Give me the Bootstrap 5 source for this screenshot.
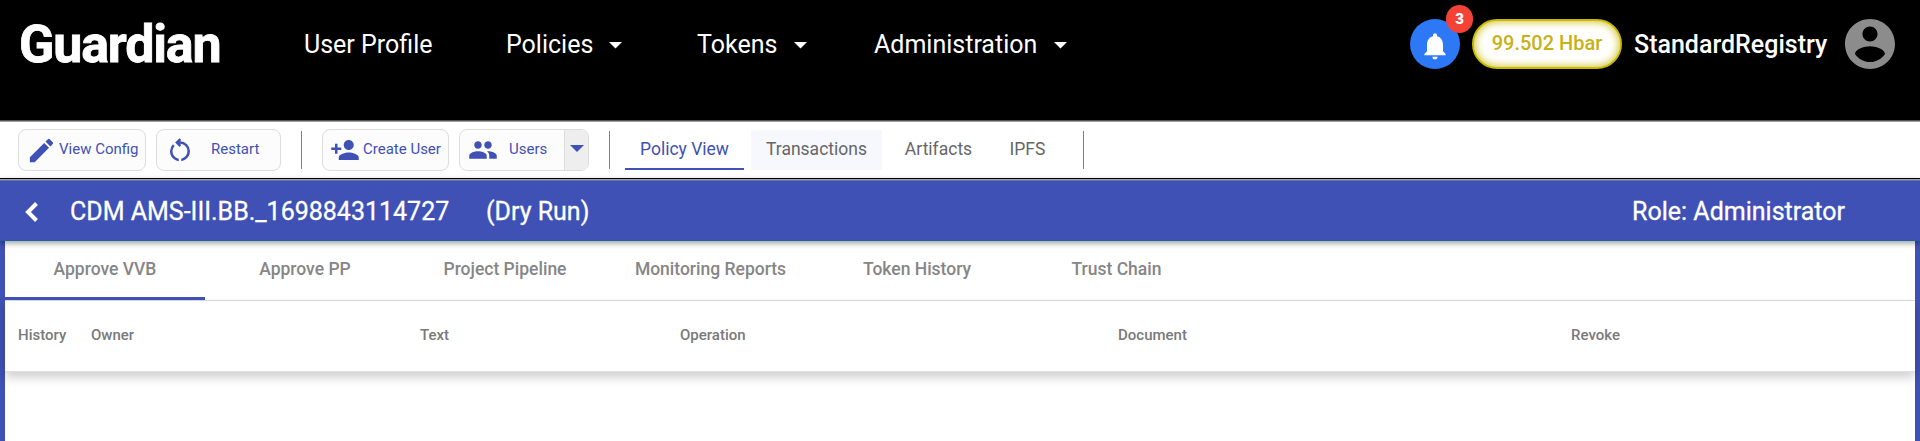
<!DOCTYPE html>
<html lang="en">
<head>
<meta charset="utf-8">
<title>Guardian</title>
<meta name="viewport" content="width=device-width, initial-scale=1">
<link rel="stylesheet" href="https://cdn.jsdelivr.net/npm/bootstrap@5.3.0/dist/css/bootstrap.min.css">
<style>
:root{--indigo:#3f51b5}
body{font-family:Roboto,"Liberation Sans",sans-serif;height:441px;overflow:hidden;background:#fff;line-height:1.2}
svg{display:block;flex:none}
.track{display:grid;justify-content:start;align-items:center;white-space:nowrap}
.topbar{height:120px;background:#000;color:#fff}
.topbar-in{height:88px}
.main-menu{grid-template-columns:304px 202px 191px 177px 300px;font-size:25px}
.wordmark{font-weight:700;font-size:52px;letter-spacing:-1.2px;padding:2px 0 0 19px;line-height:1;-webkit-text-stroke:.8px #fff}
.main-menu .nav-link{color:#fff;padding:2px 0 0}
.bell{width:50px;height:50px;border-radius:50%;background:#2c78f6}
.count{position:absolute;left:36px;top:-14px;width:27px;height:28px;border-radius:14px;background:#f44336;font-size:15px;font-weight:900;padding-bottom:1px}
.hbar{width:150px;height:50px;border:2px solid #c8b900;border-radius:25px;background:#fff;color:#c8b116;font-size:20px;font-weight:500;box-shadow:inset 0 0 10px #c8b900;padding-bottom:3px}
.acct{font-size:25px;font-weight:500;width:210px;padding-top:2px}
.edge{height:2px;background:linear-gradient(#555 50%,#a0a0a0 50%)}
.tools{height:56px;padding-left:18px}
.tool{height:42px;border:1px solid #dcdcdc;border-radius:8px;background:#fcfcfc;color:var(--indigo);font-size:15px;padding:0}
.tool span{padding-bottom:2px}
.tool-split{width:24px;height:40px;border-left:1px solid #dcdcdc;background:#eee;border-radius:0 7px 7px 0}
.bar-rule{width:1px;height:38px;background:#808080}
.view-tab{color:#666;font-size:17.5px;height:40px;padding:0 0 1px;border:0;border-radius:0}
.view-tab.active{color:var(--indigo);box-shadow:inset 0 -2px var(--indigo)}
.titlebar{height:62px;background:var(--indigo);color:#fff;font-size:25px;border-bottom:1px solid #1d63a3;position:relative;box-shadow:0 2px 6px rgba(0,0,0,.4);background-image:linear-gradient(#a0a0a0 1px,#6972b0 1px,#6972b0 2px,transparent 2px);padding-top:5px;-webkit-text-stroke:.3px #fff}
.policy{height:200px;border:solid var(--indigo);border-width:0 5px}
.step-tabs{height:60px;border-bottom:1px solid #dcdcdc;grid-template-columns:200px 200px 200px 211px 202px 197px;font-size:17.5px;font-weight:500}
.step-tabs .nav-link{color:#868686;padding:0 0 2px;height:59px}
.step-tabs .active{box-shadow:inset 0 -3px var(--indigo)}
.doc-head{height:71px;color:#7a7a7a;font-size:15px;font-weight:500;border-bottom:1px solid #e0e0e0;grid-template-columns:86px 329px 260px 438px 453px 300px;box-shadow:0 5px 10px rgba(0,0,0,.2);padding-bottom:2px}
</style>
</head>
<body>
<header class="topbar">
  <div class="topbar-in d-flex justify-content-between align-items-center">
    <nav class="main-menu track">
      <span class="wordmark">Guardian</span>
      <a class="nav-link" href="#">User Profile</a>
      <a class="nav-link d-flex align-items-center" href="#"><span style="width:103px">Policies</span><svg width="14" height="8"><path d="M0 1h13L6.500 7.500z" fill="#fff"/></svg></a>
      <a class="nav-link d-flex align-items-center" href="#"><span style="width:97px">Tokens</span><svg width="14" height="8"><path d="M0 1h13L6.500 7.500z" fill="#fff"/></svg></a>
      <a class="nav-link d-flex align-items-center" href="#"><span style="width:180px">Administration</span><svg width="14" height="8"><path d="M0 1h13L6.500 7.500z" fill="#fff"/></svg></a>
    </nav>
    <div class="d-flex align-items-center pe-4">
      <div class="bell position-relative d-flex align-items-center justify-content-center">
        <svg class="mt-1" width="32" height="32" viewBox="0 0 24 24" fill="#fff"><path d="M12 22c1.100 0 2-.9 2-2h-4c0 1.100.9 2 2 2zm6-6v-5c0-3.070-1.640-5.640-4.500-6.320V4c0-.83-.67-1.500-1.500-1.500s-1.500.67-1.500 1.500v.68C7.630 5.360 6 7.920 6 11v5l-2 2v1h16v-1l-2-2z"/></svg>
        <span class="count d-flex align-items-center justify-content-center">3</span>
      </div>
      <div class="hbar d-flex align-items-center justify-content-center" style="margin-left:12px;margin-right:12px">99.502 Hbar</div>
      <div class="acct">StandardRegistry</div>
      <svg width="52" height="50" viewBox="1.600 2 20.800 20" fill="#8c8c8c"><path fill-rule="evenodd" d="M12 2C6.480 2 2 6.480 2 12s4.480 10 10 10 10-4.480 10-10S17.520 2 12 2zm0 3c1.660 0 3 1.340 3 3s-1.340 3-3 3-3-1.340-3-3 1.340-3 3-3zm0 14.200c-2.500 0-4.710-1.280-6-3.220.03-1.990 4-3.080 6-3.080 1.990 0 5.970 1.090 6 3.080-1.290 1.940-3.500 3.220-6 3.220z"/></svg>
    </div>
  </div>
</header>
<div class="edge"></div>
<section class="tools d-flex align-items-center">
  <button class="btn tool d-flex align-items-center" style="width:128px">
    <svg width="31" height="31" viewBox="0 0 24 24" fill="#3f51b5" style="margin-left:7px"><path d="M3 17.250V21h3.750L17.810 9.940l-3.750-3.750L3 17.250zM20.710 7.040a1 1 0 0 0 0-1.410l-2.340-2.340a1 1 0 0 0-1.410 0l-1.830 1.830 3.750 3.750 1.830-1.830z"/></svg>
    <span style="margin-left:2px">View Config</span>
  </button>
  <button class="btn tool d-flex align-items-center" style="width:125px;margin-left:10px">
    <svg width="30" height="30" viewBox="0 0 24 24" fill="#3f51b5" style="margin-left:8px"><path d="M6 13c0-1.650.67-3.150 1.760-4.240L6.340 7.340A8 8 0 0 0 4 13c0 4.080 3.050 7.440 7 7.930v-2.020c-2.830-.48-5-2.940-5-5.910zm14 0a8 8 0 0 0-8-8h-.06l1.090-1.090L11.620 2.500l-3.500 3.500 3.500 3.500 1.410-1.410L11.940 7H12a6 6 0 0 1 1 11.910v2.020A8 8 0 0 0 20 13z"/></svg>
    <span style="margin-left:16px">Restart</span>
  </button>
  <i class="bar-rule" style="margin:0 20px"></i>
  <button class="btn tool d-flex align-items-center" style="width:127px">
    <svg width="30" height="30" viewBox="0 0 24 24" fill="#3f51b5" style="margin-left:7px"><path d="M15 12c2.210 0 4-1.790 4-4s-1.790-4-4-4-4 1.790-4 4 1.790 4 4 4zm-9-2V7H4v3H1v2h3v3h2v-3h3v-2H6zm9 4c-2.670 0-8 1.340-8 4v2h16v-2c0-2.660-5.330-4-8-4z"/></svg>
    <span style="margin-left:3px">Create User</span>
  </button>
  <div class="tool d-flex align-items-center" style="width:130px;margin-left:10px">
    <svg width="30" height="30" viewBox="0 0 24 24" fill="#3f51b5" style="margin-left:8px"><path d="M16 11c1.660 0 2.990-1.340 2.990-3S17.660 5 16 5s-3 1.340-3 3 1.340 3 3 3zm-8 0c1.660 0 2.990-1.340 2.990-3S9.660 5 8 5 5 6.340 5 8s1.340 3 3 3zm0 2c-2.330 0-7 1.170-7 3.500V19h14v-2.500c0-2.330-4.670-3.500-7-3.500zm8 0c-.29 0-.62.02-.97.05 1.160.84 1.970 1.970 1.970 3.450V19h6v-2.500c0-2.330-4.670-3.500-7-3.500z"/></svg>
    <span style="margin-left:11px">Users</span>
    <div class="tool-split ms-auto d-flex align-items-center justify-content-center"><svg class="mb-1" width="14" height="8"><path d="M0 1h14L7 8z" fill="#3f51b5"/></svg></div>
  </div>
  <i class="bar-rule" style="margin:0 15px 0 20px"></i>
  <a class="btn view-tab active d-flex align-items-center justify-content-center" style="width:119px">Policy View</a>
  <a class="btn view-tab d-flex align-items-center justify-content-center" style="width:131px;margin:0 7px;background:#f6f8fd">Transactions</a>
  <a class="btn view-tab d-flex align-items-center justify-content-center" style="width:99px">Artifacts</a>
  <a class="btn view-tab d-flex align-items-center justify-content-center" style="width:79px">IPFS</a>
  <i class="bar-rule" style="margin-left:16px"></i>
</section>
<div style="height:1px" class="bg-black"></div>
<section class="titlebar d-flex align-items-center">
  <svg width="13" height="20" style="margin-left:25px"><path d="M11.500 1.500L3 10l8.500 8.500" fill="none" stroke="#fff" stroke-width="4"/></svg>
  <span style="width:416px;margin-left:32px">CDM AMS-III.BB._1698843114727</span>
  <span>(Dry Run)</span>
  <span class="ms-auto" style="margin-right:75px">Role: Administrator</span>
</section>
<main class="policy">
  <nav class="step-tabs track">
    <a class="nav-link active d-flex align-items-center justify-content-center" href="#">Approve VVB</a>
    <a class="nav-link d-flex align-items-center justify-content-center" href="#">Approve PP</a>
    <a class="nav-link d-flex align-items-center justify-content-center" href="#">Project Pipeline</a>
    <a class="nav-link d-flex align-items-center justify-content-center" href="#">Monitoring Reports</a>
    <a class="nav-link d-flex align-items-center justify-content-center" href="#">Token History</a>
    <a class="nav-link d-flex align-items-center justify-content-center" href="#">Trust Chain</a>
  </nav>
  <div class="doc-head track">
    <span style="padding-left:13px">History</span><span>Owner</span><span>Text</span><span>Operation</span><span>Document</span><span>Revoke</span>
  </div>
</main>
<script src="https://cdn.jsdelivr.net/npm/bootstrap@5.3.0/dist/js/bootstrap.bundle.min.js"></script>
</body>
</html>
